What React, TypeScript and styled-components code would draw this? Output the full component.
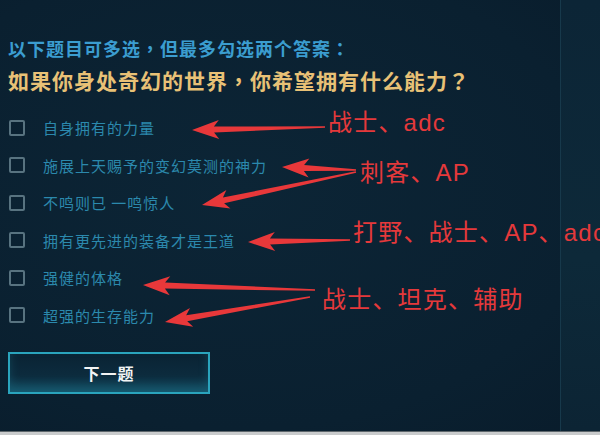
import React from 'react';
import styled, { createGlobalStyle } from 'styled-components';

const GlobalStyle = createGlobalStyle`
  html, body {
    margin: 0;
    padding: 0;
    background: #0b2131;
  }
  body {
    font-family: "Noto Sans CJK SC", "Liberation Sans", sans-serif;
    text-spacing-trim: space-all;
  }
`;

const Frame = styled.div`
  width: 600px;
  height: 435px;
  display: flex;
  flex-direction: column;
  overflow: hidden;
`;

const Screen = styled.div`
  position: relative;
  flex: 1;
  display: flex;
  overflow: hidden;
  background: radial-gradient(ellipse at 40% 45%, #0c2536 0%, #0a2030 70%, #091c2b 100%);
`;

const Main = styled.div`
  width: 560px;
  box-sizing: border-box;
  padding: 36px 0 0 8px;
  display: flex;
  flex-direction: column;
`;

const SideStrip = styled.div`
  flex: 1;
  border-left: 1px solid #17394b;
  background: linear-gradient(180deg, #0c2536 0%, #0d2939 60%, #0c2434 100%);
`;

const BottomBar = styled.div`
  height: 3px;
  background: #c9cbcc;
  border-top: 1px solid #5d666b;
`;

const Hint = styled.div`
  font-family: "Noto Sans CJK TC", "Noto Sans CJK SC", sans-serif;
  font-size: 18px;
  line-height: 24px;
  font-weight: 700;
  letter-spacing: 1px;
  color: #3b9dd0;
`;

const Question = styled.div`
  margin-top: 6px;
  font-family: "Noto Sans CJK TC", "Noto Sans CJK SC", sans-serif;
  font-size: 21px;
  line-height: 28px;
  font-weight: 700;
  letter-spacing: 1px;
  color: #e8c176;
`;

const OptionList = styled.div`
  margin-top: 15px;
  display: flex;
  flex-direction: column;
`;

const Option = styled.label`
  height: 37.5px;
  display: flex;
  align-items: center;
  gap: 18px;
  cursor: pointer;
`;

const Box = styled.span`
  width: 16px;
  height: 16px;
  margin-left: 1px;
  box-sizing: border-box;
  border: 2px solid #587380;
  border-radius: 2px;
`;

const OptionText = styled.span`
  font-size: 15px;
  letter-spacing: 1px;
  color: #2b89ad;
`;

const NextButton = styled.button`
  margin-top: 18px;
  width: 202px;
  height: 42px;
  border: 2px solid #2aa4bd;
  background: linear-gradient(180deg, #0a2334 0%, #0c2b3d 55%, #11465a 100%);
  box-shadow: inset 0 -6px 10px rgba(40, 150, 180, 0.25);
  color: #f2f4f4;
  font-family: "Noto Sans CJK SC", sans-serif;
  font-size: 16px;
  font-weight: 700;
  letter-spacing: 1px;
  cursor: pointer;
`;

const Notes = styled.svg`
  position: absolute;
  left: 0;
  top: 0;
  pointer-events: none;
`;

const Note = styled.div<{ x: number; y: number }>`
  position: absolute;
  left: ${(p) => p.x}px;
  top: ${(p) => p.y}px;
  font-family: "Liberation Sans", "Noto Sans CJK SC", sans-serif;
  font-size: 24px;
  line-height: 1;
  letter-spacing: 1.2px;
  white-space: nowrap;
  color: #e5393b;
`;

const options = [
  '自身拥有的力量',
  '施展上天赐予的变幻莫测的神力',
  '不鸣则已 一鸣惊人',
  '拥有更先进的装备才是王道',
  '强健的体格',
  '超强的生存能力',
];

const arrows: [number, number, number, number][] = [
  [325, 127, 192, 130],
  [356, 170, 282, 167],
  [356, 172, 202, 205],
  [350, 240, 248, 242],
  [315, 290, 143, 285],
  [310, 297, 165, 322],
];

const notes = [
  { x: 328, y: 111, text: '战士、adc' },
  { x: 360, y: 161, text: '刺客、AP' },
  { x: 353, y: 221, text: '打野、战士、AP、adc' },
  { x: 322, y: 288, text: '战士、坦克、辅助' },
];

// tapered arrow polygon from tail to tip
function arrowPoints(x1: number, y1: number, x2: number, y2: number) {
  const dx = x2 - x1;
  const dy = y2 - y1;
  const len = Math.hypot(dx, dy);
  const ux = dx / len;
  const uy = dy / len;
  const nx = -uy;
  const ny = ux;
  const head = 22;
  const bx = x2 - ux * head;
  const by = y2 - uy * head;
  const wx = x2 - ux * (head + 5);
  const wy = y2 - uy * (head + 5);
  const pts = [
    [x1 + nx * 0.8, y1 + ny * 0.8],
    [bx + nx * 3, by + ny * 3],
    [wx + nx * 9.5, wy + ny * 9.5],
    [x2, y2],
    [wx - nx * 9.5, wy - ny * 9.5],
    [bx - nx * 3, by - ny * 3],
    [x1 - nx * 0.8, y1 - ny * 0.8],
  ];
  return pts.map((p) => `${p[0].toFixed(1)},${p[1].toFixed(1)}`).join(' ');
}

export default function App() {
  return (
    <Frame>
      <GlobalStyle />
      <Screen>
        <Main>
          <Hint>以下题目可多选，但最多勾选两个答案：</Hint>
          <Question>如果你身处奇幻的世界，你希望拥有什么能力？</Question>
          <OptionList>
            {options.map((o) => (
              <Option key={o}>
                <Box />
                <OptionText>{o}</OptionText>
              </Option>
            ))}
          </OptionList>
          <NextButton>下一题</NextButton>
        </Main>
        <SideStrip />
        <Notes width="600" height="432" viewBox="0 0 600 432">
          {arrows.map((a, i) => (
            <polygon key={i} points={arrowPoints(...a)} fill="#e8383a" />
          ))}
        </Notes>
        {notes.map((n) => (
          <Note key={n.text} x={n.x} y={n.y}>
            {n.text}
          </Note>
        ))}
      </Screen>
      <BottomBar />
    </Frame>
  );
}
